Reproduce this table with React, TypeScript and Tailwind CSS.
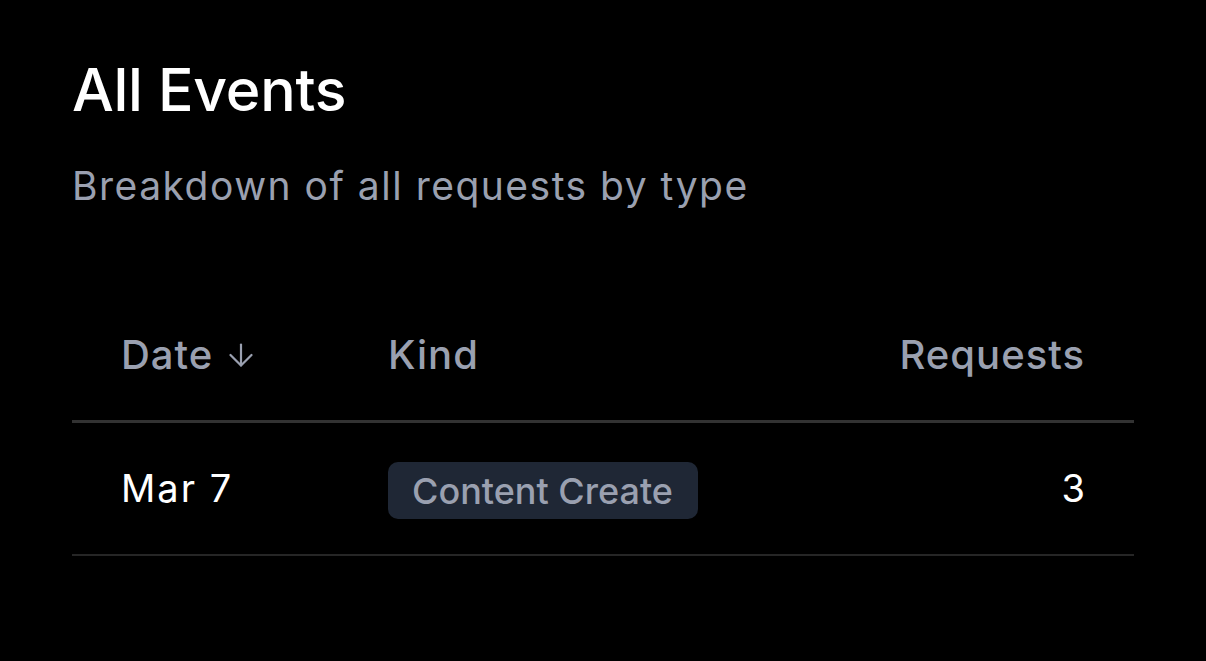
import React from 'react';

const rows = [{ date: 'Mar 7', kind: 'Content Create', requests: 3 }];

const SortDown = () => (
  <svg width="26" height="24" viewBox="0 0 26 24" fill="none" stroke="currentColor" strokeWidth="2.2" strokeLinecap="round" strokeLinejoin="round">
    <path d="M13 1.5v21" />
    <path d="M2.5 12 13 22.5 23.5 12" />
  </svg>
);

const App = () => {
  return (
    <div className="min-h-[661px] w-full bg-black px-[72px] pt-[54px] font-['Inter',sans-serif] text-white">
      <h1 className="text-[59px] font-medium leading-[72px] tracking-[-0.3px]">All Events</h1>
      <p className="mt-[36px] text-[39px] leading-[48px] tracking-[1.5px] text-[#9aa0b0]">
        Breakdown of all requests by type
      </p>

      <div className="mt-[80px] w-[1062px]">
        <div className="grid h-[133px] grid-cols-[267px_1fr_auto] items-center border-b-[3px] border-[#323232] px-[49px] text-[40px] font-medium tracking-[1px] text-[#9aa0b0]">
          <div className="flex items-center gap-[15px]">
            Date
            <SortDown />
          </div>
          <div>Kind</div>
          <div className="text-right">Requests</div>
        </div>
        {rows.map((r) => (
          <div
            key={r.date}
            className="grid h-[133px] grid-cols-[267px_1fr_auto] items-center border-b-2 border-[#262626] px-[49px] text-[38px]"
          >
            <div className="tracking-[2px]">{r.date}</div>
            <div>
              <span className="mt-[4px] inline-flex h-[57px] items-center rounded-[10px] bg-[#1f2735] pl-[24px] pr-[25px] text-[36px] font-medium text-[#9aa0b0]">
                {r.kind}
              </span>
            </div>
            <div className="text-right">{r.requests}</div>
          </div>
        ))}
      </div>
    </div>
  );
};

export default App;
